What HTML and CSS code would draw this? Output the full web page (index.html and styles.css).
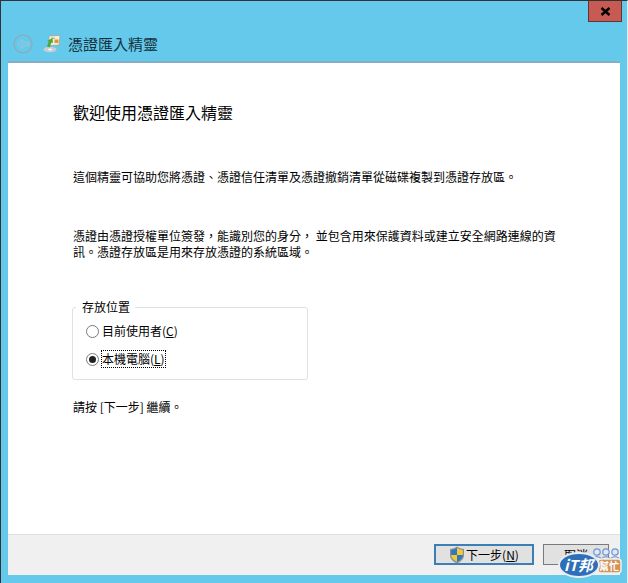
FILE: index.html
```html
<!DOCTYPE html>
<html lang="zh-Hant">
<head>
  <meta charset="UTF-8">
  <title>憑證匯入精靈</title>
  <link rel="stylesheet" href="styles.css">
</head>
<body>
  <div class="window">
    <!-- Title bar -->
    <div class="titlebar">
      <button class="close">
        <svg width="11" height="9" viewBox="0 0 11 9"><path d="M1.5 1 L9.5 8 M9.5 1 L1.5 8" stroke="#000" stroke-width="2.4" fill="none"/></svg>
      </button>
      <div class="title-row">
        <svg class="back" width="20" height="20" viewBox="0 0 20 20">
          <circle cx="10" cy="10" r="9" fill="none" stroke="#86afc2" stroke-width="1.5"/>
          <path d="M4.5 10 L9.5 5.5 V8.3 H15.5 V11.7 H9.5 V14.5Z" fill="#6ccbea" stroke="#9cc4d4" stroke-width="1"/>
        </svg>
        <svg class="wizard-icon" width="18" height="18" viewBox="0 0 18 18">
          <path d="M6 1 L17 0.5 L16 10 L6 10.5Z" fill="#f6f1e2" stroke="#a89f86" stroke-width="0.7"/>
          <rect x="11.5" y="4.5" width="4" height="3.5" fill="#dd9a2e"/>
          <rect x="8" y="2.5" width="4" height="1.5" fill="#c9b98a"/>
          <ellipse cx="7" cy="14.5" rx="6.5" ry="2.8" fill="#c9ced2"/>
          <ellipse cx="7" cy="14.5" rx="2" ry="1" fill="#f2f4f5"/>
          <path d="M9.5 3 L10 8 L8.3 7.4 L6.8 12.5 L4 11.5 L5.8 6.4 L4 6Z" fill="#4aa83c"/>
        </svg>
        <span class="title">憑證匯入精靈</span>
      </div>
    </div>

    <!-- Wizard page -->
    <div class="content">
      <h1>歡迎使用憑證匯入精靈</h1>
      <p class="intro">這個精靈可協助您將憑證、憑證信任清單及憑證撤銷清單從磁碟複製到憑證存放區。</p>
      <p class="desc">憑證由憑證授權單位簽發，能識別您的身分， 並包含用來保護資料或建立安全網路連線的資訊。憑證存放區是用來存放憑證的系統區域。</p>

      <fieldset class="location">
        <legend>存放位置</legend>
        <label class="option"><span class="radio"></span><span>目前使用者(<u>C</u>)</span></label>
        <label class="option"><span class="radio checked"></span><span class="focused">本機電腦(<u>L</u>)</span></label>
      </fieldset>

      <p class="next-hint">請按 [下一步] 繼續。</p>
    </div>

    <!-- Buttons -->
    <div class="footer">
      <button class="btn primary">
        <svg width="16" height="18" viewBox="0 0 16 18">
          <path d="M8 0.5 C10 2 12.5 2.8 15 3 V9 C15 13 12 15.8 8 17.5 C4 15.8 1 13 1 9 V3 C3.5 2.8 6 2 8 0.5Z" fill="#8a8f96"/>
          <path d="M8 2 V9 H2.2 V3.9 C4.2 3.7 6.3 3.1 8 2Z" fill="#2f78c8"/>
          <path d="M8 2 C9.7 3.1 11.8 3.7 13.8 3.9 V9 H8Z" fill="#f6c92e"/>
          <path d="M2.2 9 H8 V15.8 C4.8 14.3 2.4 12.2 2.2 9Z" fill="#f6c92e"/>
          <path d="M8 9 H13.8 C13.6 12.2 11.2 14.3 8 15.8Z" fill="#2f78c8"/>
        </svg>
        <span>下一步(<u>N</u>)</span>
      </button>
      <button class="btn cancel">取消</button>
    </div>

    <!-- Site watermark -->
    <div class="watermark">
      <svg width="64" height="32" viewBox="0 0 64 32">
        <g fill="#dfe8f6" stroke="#6f94cf" stroke-width="1.2">
          <circle cx="39" cy="5" r="3.2"/><circle cx="48" cy="5" r="3.2"/><circle cx="57" cy="5" r="3.2"/>
          <path d="M34 15 C34 8 44 8 44 15Z"/><path d="M43 15 C43 8 53 8 53 15Z"/><path d="M52 15 C52 8 62 8 62 15Z"/>
        </g>
        <rect x="40" y="12" width="23" height="14" rx="3" fill="#d2935c" stroke="#f3efe9" stroke-width="1.5"/>
        <ellipse cx="21" cy="18" rx="21" ry="13" fill="#e8eef6"/>
        <ellipse cx="21" cy="18" rx="19" ry="11" fill="#2f6fb7"/>
      </svg>
      <span class="wm-it">iT邦</span>
      <span class="wm-help">幫忙</span>
    </div>
  </div>
</body>
</html>
```

FILE: styles.css
```css
html, body {
  margin: 0;
  padding: 0;
  height: 100%;
  overflow: hidden;
}

body {
  font-family: "Noto Sans CJK TC", "Liberation Sans", sans-serif;
  font-size: 12px;
  color: #000;
}

.window {
  position: relative;
  box-sizing: border-box;
  width: 628px;
  height: 583px;
  display: flex;
  flex-direction: column;
  background: #65c9eb;
  border-top: 1px solid #333;
  border-left: 1px solid #333;
  border-right: 1px solid #dff1f8;
  padding: 0 7px 8px 7px;
}

/* Title bar */
.titlebar {
  height: 62px;
  flex: none;
  box-shadow: inset 0 -2px 0 #85aec6;
}

.close {
  display: flex;
  align-items: center;
  justify-content: center;
  box-sizing: border-box;
  width: 34px;
  height: 21px;
  margin: 0 -2px 0 auto;
  padding: 0;
  background: #c75b53;
  border: 1px solid #5e3533;
  border-top: 0;
}

.title-row {
  display: flex;
  align-items: center;
  margin: 12px 0 0 5px;
}

.back { margin-right: 10px; }
.wizard-icon { margin-right: 7px; }

.title {
  font-size: 15px;
  color: #14323f;
  line-height: 20px;
}

/* Wizard page */
.content {
  flex: 1;
  background: #fff;
  padding: 39px 0 0 65px;
}

h1 {
  margin: 0;
  font-size: 16px;
  font-weight: normal;
  line-height: 20px;
}

.intro {
  margin: 46px 0 0;
  line-height: 18px;
}

.desc {
  margin: 42px 0 0;
  width: 490px;
  line-height: 16px;
}

.location {
  box-sizing: border-box;
  width: 236px;
  height: 80px;
  margin: 40px 0 0 -1px;
  padding: 8px 0 0;
  border: 1px solid #dce2e8;
  border-radius: 3px;
}

.location legend {
  margin-left: 3px;
  padding: 0 5px 0 6px;
  line-height: 14px;
}

.option {
  display: flex;
  align-items: center;
  gap: 3px;
  height: 18px;
  margin: 0 0 10px 13px;
  line-height: 16px;
}

.radio {
  box-sizing: border-box;
  width: 13px;
  height: 13px;
  display: flex;
  align-items: center;
  justify-content: center;
  background: #fff;
  border: 1px solid #7b7b7b;
  border-radius: 50%;
}

.radio.checked::after {
  content: '';
  width: 7px;
  height: 7px;
  background: #222;
  border-radius: 50%;
}

.focused { outline: 1px dotted #000; }

.next-hint {
  margin: 19px 0 0;
  line-height: 16px;
}

/* Buttons */
.footer {
  flex: none;
  height: 41px;
  display: flex;
  justify-content: flex-end;
  align-items: flex-start;
  gap: 9px;
  padding: 9px 11px 0 0;
  box-sizing: border-box;
  background: #f0f0f0;
  border-top: 1px solid #dfdfdf;
}

.btn {
  box-sizing: border-box;
  width: 100px;
  height: 21px;
  display: flex;
  align-items: center;
  justify-content: center;
  gap: 1px;
  padding: 0;
  font: inherit;
  color: #000;
  background: #e1e1e1;
  border: 1px solid #adadad;
}

.btn.primary { border: 2px solid #3b7fb5; }
.btn.cancel { width: 66px; border-color: #7a7a7a; }

/* Site watermark */
.watermark {
  position: absolute;
  right: 5px;
  bottom: 4px;
  width: 64px;
  height: 32px;
}

.wm-it, .wm-help {
  position: absolute;
  font-weight: bold;
  color: #fff;
  white-space: nowrap;
}

.wm-it { left: 6px; top: 9px; font-size: 15px; line-height: 18px; font-style: italic; }
.wm-help { left: 41px; top: 12px; font-size: 10px; line-height: 14px; }
```
